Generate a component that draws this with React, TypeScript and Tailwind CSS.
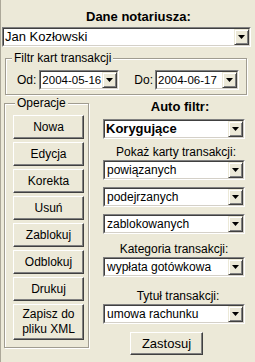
import React from "react";

const FACE = "font-['Liberation_Sans',Arial,sans-serif]";

function Arrow() {
  return (
    <svg width="7" height="4" viewBox="0 0 7 4">
      <path d="M0 0h7L3.5 4z" fill="#000" />
    </svg>
  );
}

function DropBtn() {
  return (
    <div className="flex w-[15px] shrink-0 items-center justify-center border border-t-[#ece9d8] border-l-[#ece9d8] border-b-[#404040] border-r-[#404040] bg-[#ece9d8] shadow-[inset_1px_1px_0_#fff,inset_-1px_-1px_0_#808080]">
      <Arrow />
    </div>
  );
}

function Combo({
  value,
  bold,
  className = "",
  textClass = "text-[12px] pl-[2px]",
}: {
  value: string;
  bold?: boolean;
  className?: string;
  textClass?: string;
}) {
  return (
    <div
      className={
        "flex h-[20px] border border-t-[#808080] border-l-[#808080] border-b-white border-r-white " +
        className
      }
    >
      <div className="flex min-w-0 flex-1 border border-t-[#404040] border-l-[#404040] border-b-[#d4d0c8] border-r-[#d4d0c8] bg-white">
        <span
          className={
            "flex-1 overflow-hidden whitespace-nowrap leading-[16px] " +
            textClass +
            (bold ? " font-bold" : "")
          }
        >
          {value}
        </span>
        <DropBtn />
      </div>
    </div>
  );
}

function Button({
  children,
  className = "",
}: {
  children: React.ReactNode;
  className?: string;
}) {
  return (
    <div
      className={
        "flex items-center justify-center text-center border border-t-white border-l-white border-b-[#404040] border-r-[#404040] bg-[#ece9d8] shadow-[inset_-1px_-1px_0_#808080] " +
        className
      }
    >
      {children}
    </div>
  );
}

const OPS = ["Nowa", "Edycja", "Korekta", "Usuń", "Zablokuj", "Odblokuj", "Drukuj"];

export default function App() {
  return (
    <div
      className={`w-[255px] h-[362px] overflow-hidden bg-[#ece9d8] border-l border-[#aca899] text-[12px] leading-[15px] text-black ${FACE}`}
    >
      <div className="pt-[9px] pl-[85px] text-[13px] font-bold">Dane notariusza:</div>

      <Combo value="Jan Kozłowski" className="mt-[3px] ml-[1px] w-[249px]" textClass="text-[13px] pl-[1px]" />

      <fieldset className="mt-[4px] ml-[4px] w-[242px] border border-[#a09c90] shadow-[1px_1px_0_#fff,inset_1px_1px_0_#fff]">
        <legend className="ml-[6px] px-[2px] bg-[#ece9d8]">Filtr kart transakcji</legend>
        <div className="flex items-center pt-[4px] pb-[4px] pl-[11px]">
          <span>Od:</span>
          <Combo value="2004-05-16" className="ml-[3px] w-[80px]" textClass="text-[11.5px] pl-[1px]" />
          <span className="ml-[15px]">Do:</span>
          <Combo value="2004-06-17" className="ml-[2px] w-[84px]" textClass="text-[11.5px] pl-[1px]" />
        </div>
      </fieldset>

      <div className="mt-[1px] flex items-start">
        <fieldset className="ml-[3px] w-[85px] border border-[#a09c90] shadow-[1px_1px_0_#fff,inset_1px_1px_0_#fff]">
          <legend className="ml-[10px] px-[2px] bg-[#ece9d8]">Operacje</legend>
          <div className="flex flex-col gap-[3px] pt-[4px] pb-[7px] pl-[8px]">
            {OPS.map((op) => (
              <Button key={op} className="h-[24px] w-[71px]">
                {op}
              </Button>
            ))}
            <Button className="h-[36px] w-[71px]">
              Zapisz do
              <br />
              pliku XML
            </Button>
          </div>
        </fieldset>

        <div className="ml-[14px] flex w-[142px] flex-col pt-[3px]">
          <div className="h-[15px] pl-[12px] text-center text-[13px] font-bold">Auto filtr:</div>
          <Combo value="Korygujące" bold textClass="text-[13px] pl-[1px]" className="mt-[5px]" />
          <div className="mt-[6px] h-[15px] pl-[4px] text-center">Pokaż karty transakcji:</div>
          <Combo value="powiązanych" />
          <Combo value="podejrzanych" className="mt-[7px]" />
          <Combo value="zablokowanych" className="mt-[7px]" />
          <div className="mt-[8px] h-[15px] text-center">Kategoria transakcji:</div>
          <Combo value="wypłata gotówkowa" />
          <div className="mt-[12px] h-[15px] pl-[8px] text-center">Tytuł transakcji:</div>
          <Combo value="umowa rachunku" />
          <Button className="mt-[8px] ml-[27px] h-[23px] w-[73px] text-[13px]">Zastosuj</Button>
        </div>
      </div>
    </div>
  );
}
